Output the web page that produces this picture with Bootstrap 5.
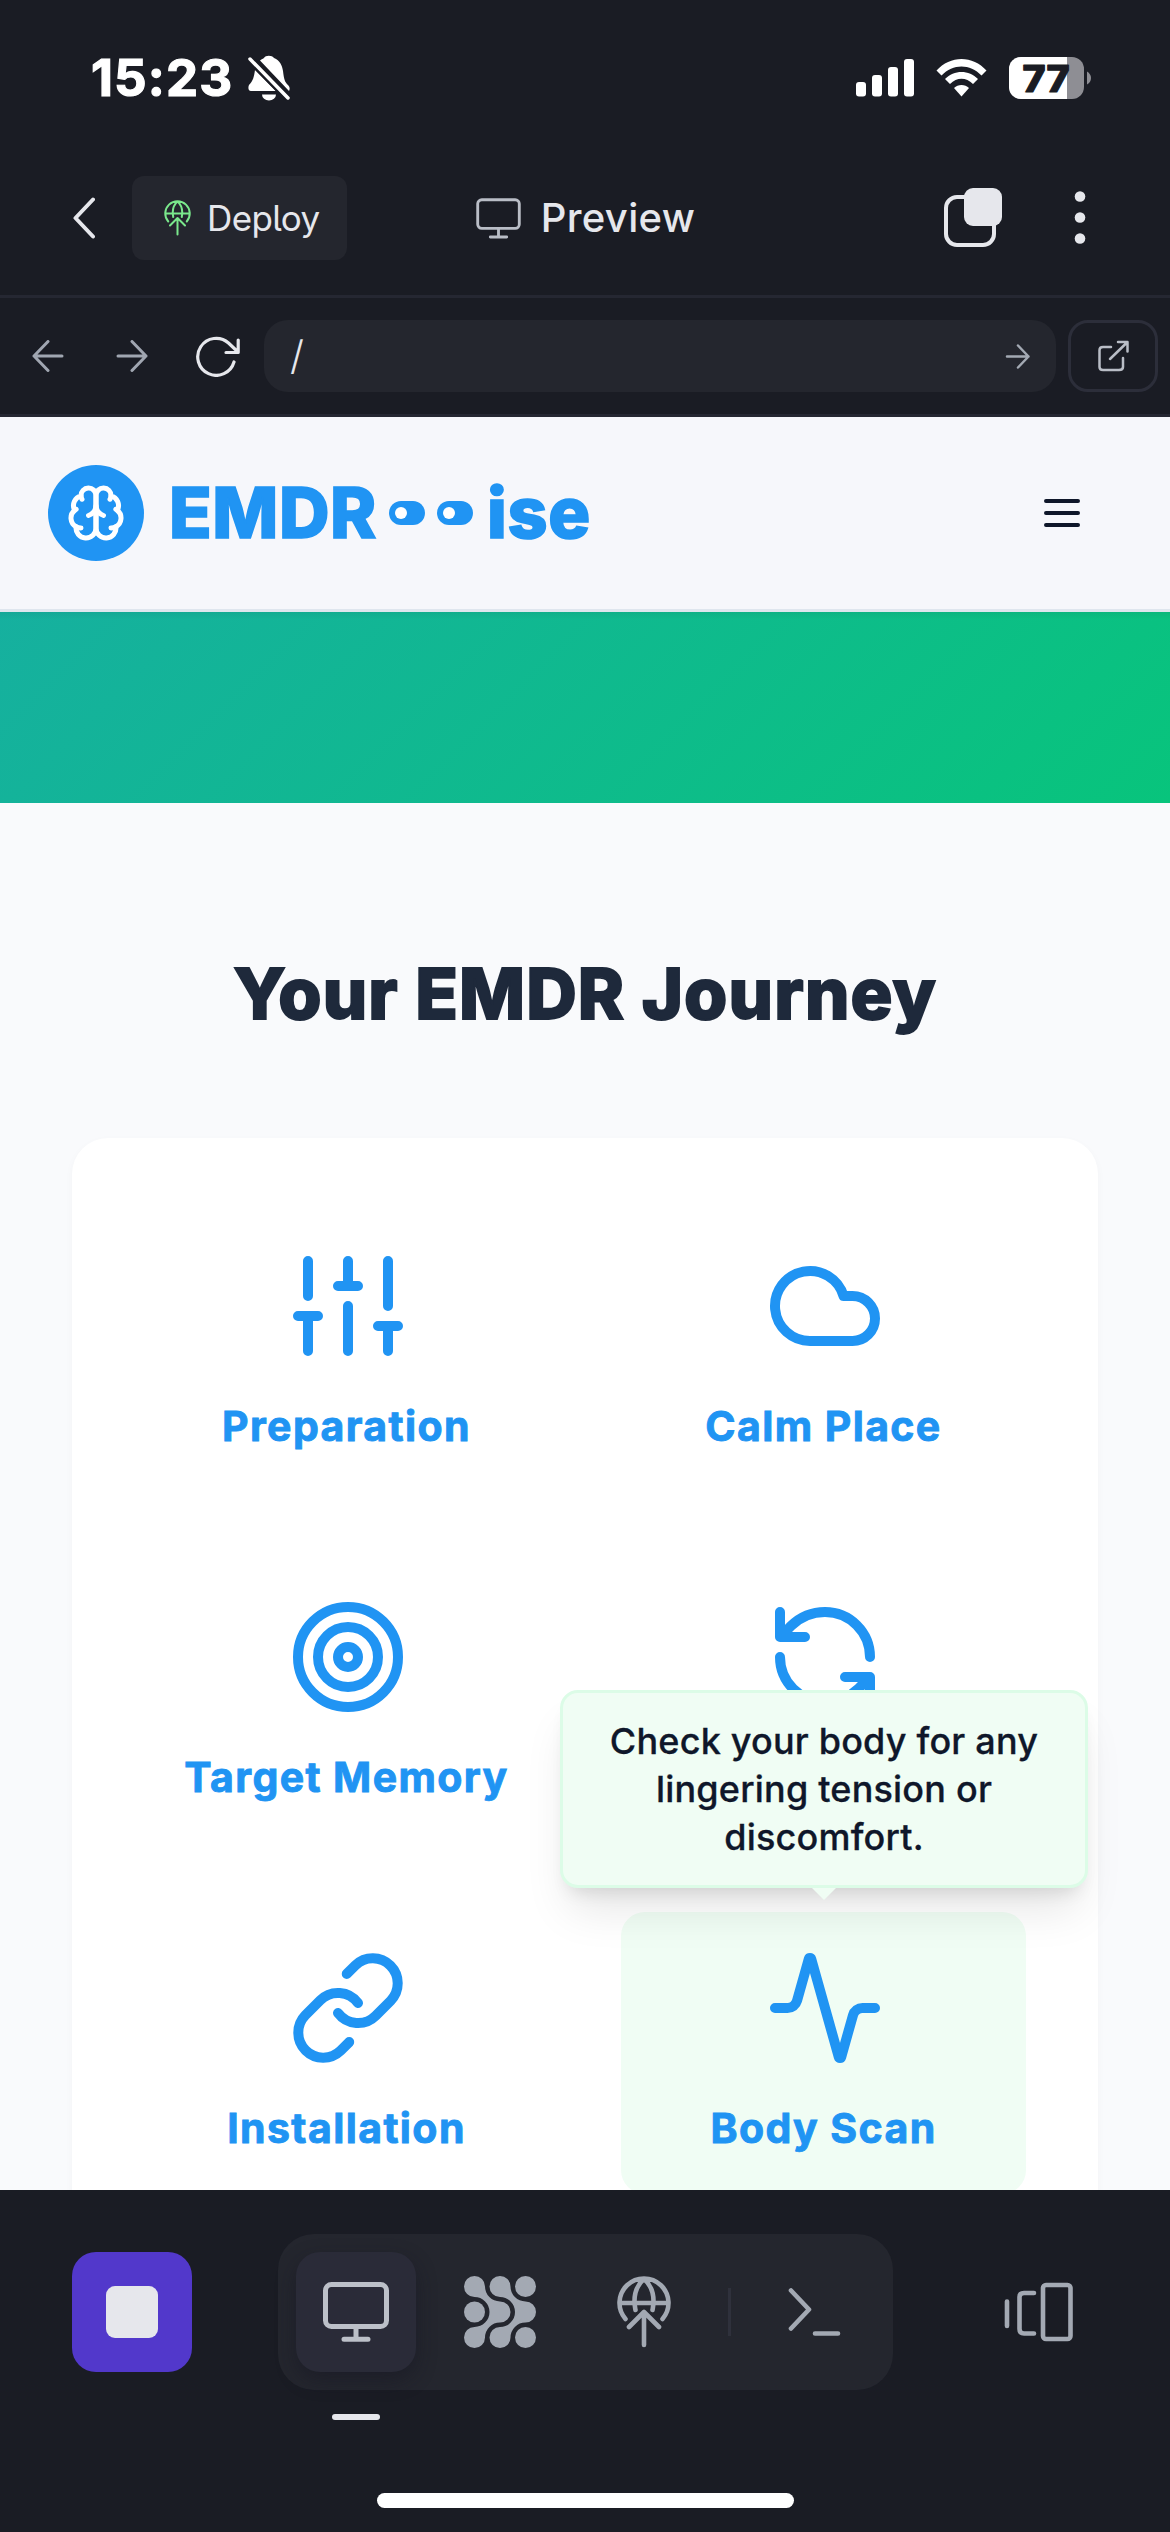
<!DOCTYPE html>
<html lang="en">
<head>
<meta charset="utf-8">
<title>EMDRwise preview</title>
<meta name="viewport" content="width=device-width, initial-scale=1">
<link rel="stylesheet" href="https://cdn.jsdelivr.net/npm/bootstrap@5.3.0/dist/css/bootstrap.min.css">
<style>
:root { --ink:#1a1c24; --panel:#24262e; --line:#252732; --light:#e6e7ec; --mute:#a3a9b3; --blue:#2094f3; }
body { width:1170px; height:2532px; overflow:hidden; background:var(--ink); font-family:Inter,"Liberation Sans",sans-serif; }
svg { display:block; flex:none; fill:none; stroke-linecap:round; stroke-linejoin:round; }
.status { height:141px; padding:15px 78px 0 91px; }
.clock { font-size:51px; font-weight:700; line-height:60px; width:157px; letter-spacing:1.1px; -webkit-text-stroke:1.2px #fff; }
.appbar { height:157px; padding:0 78px 0 73px; border-bottom:3px solid var(--line); color:var(--light); display:grid; grid-template-columns:1fr auto 1fr; align-items:center; }
.deploy { background:var(--panel); border-radius:12px; width:215px; height:84px; margin-left:37px; padding-left:32px; gap:16px; font-size:35px; color:var(--light); }
.deploy span { letter-spacing:-.6px; font-feature-settings:"cv05"; }
.title-grp { gap:20px; padding-left:6px; }
.title-txt { font-size:40px; font-weight:500; letter-spacing:.3px; }
.urlbar { height:119px; padding:0 12px 0 32px; border-bottom:3px solid var(--line); }
.url { height:72px; width:792px; border-radius:24px; background:var(--panel); margin-left:24px; padding:0 26px 0 26px; }
.url span { font-size:40px; font-weight:300; color:var(--light); }
.open-btn { width:90px; height:72px; border:3px solid #2c2e3a; border-radius:20px; margin-left:12px; }
.site { height:1773px; background:#f9fafc; }
.site-head { height:195px; background:#f6f7fb; border-bottom:3px solid #dfe6ee; padding:0 84px 0 48px; }
.logo { width:96px; height:96px; background:var(--blue); border-radius:50%; margin-right:25px; }
.brand { font-size:70px; font-weight:800; color:var(--blue); line-height:1; letter-spacing:.6px; -webkit-text-stroke:1.6px var(--blue); }
.eye { width:36px; height:24px; border-radius:12px; background:var(--blue); padding-left:6px; }
.eye i { width:12px; height:12px; border-radius:50%; background:#fff; }
.hero { height:191px; background:linear-gradient(180deg,rgba(0,0,0,.05),transparent 8px),linear-gradient(135deg,#16b09f 0%,#08c47c 100%); }
.journey { font-size:70px; font-weight:800; color:#1e293b; line-height:84px; margin:149px 0 102px; letter-spacing:1.1px; -webkit-text-stroke:1.8px #1e293b; }
.steps { margin:0 72px; background:#fff; border-radius:36px; padding:72px; display:grid; grid-template-columns:405px 405px; column-gap:72px; row-gap:69px; box-shadow:0 3px 9px rgba(15,23,42,.03); }
.step { height:282px; border-radius:24px; padding-top:36px; position:relative; color:var(--blue); font-size:41px; font-weight:700; }
.step svg { width:120px; height:120px; stroke:var(--blue); stroke-width:2; margin-left:3px; }
.step .name { line-height:60px; margin-top:30px; white-space:nowrap; letter-spacing:1.4px; -webkit-text-stroke:.9px var(--blue); }
.step.on { background:#f0fdf4; }
.tip { position:absolute; left:-61px; bottom:306px; width:528px; height:198px; z-index:2; background:#f0fdf4; border:3px solid #dcfce7; border-radius:18px; box-shadow:0 30px 45px -9px rgba(0,0,0,.1),0 12px 18px -9px rgba(0,0,0,.12); color:#0f172a; font-size:36px; font-weight:500; line-height:48px; letter-spacing:.2px; padding:24px 36px 18px; -webkit-text-stroke:.3px #0f172a; }
.tip::after { content:""; position:absolute; left:249px; top:195px; border:12px solid transparent; border-top-color:#f0fdf4; border-bottom:0; }
.dock { height:342px; padding:44px 96px 0 72px; position:relative; }
.stop { width:120px; height:120px; border-radius:24px; background:#5238cb; margin-top:18px; }
.stop i { width:52px; height:52px; border-radius:9px; background:var(--light); }
.tabs { width:615px; height:156px; border-radius:36px; background:var(--panel); margin-left:86px; padding:18px; }
.tab { width:120px; height:120px; border-radius:24px; position:relative; }
.tab + .tab, .tab + .sep, .sep + .tab { margin-left:24px; }
.tab.on { background:#2a2b38; box-shadow:0 8px 20px rgba(20,20,34,.45); }
.tab.on::after { content:""; position:absolute; left:36px; top:162px; width:48px; height:6px; border-radius:3px; background:var(--light); }
.sep { width:3px; height:48px; background:#2f313c; }
.home { position:absolute; left:377px; top:303px; width:417px; height:15px; border-radius:8px; background:#fff; }
</style>
</head>
<body class="d-flex flex-column">
<svg width="0" height="0" class="position-absolute">
  <symbol id="globe" viewBox="0 0 54 72"><path d="M8.500 43A24.500 24.500 0 1 1 45.500 43M2.500 27H51.500M27 3C20 9 17.500 18 17.500 25C17.500 29 18 31 18.500 34M27 3C34 9 36.500 18 36.500 25C36.500 29 36 31 35.500 34M27 37V69M12 51L27 36L42 51"/></symbol>
  <symbol id="screen" viewBox="0 0 66 60"><rect x="2.500" y="2.500" width="61" height="42" rx="6"/><path d="M33 45V57M21 57.200H45"/></symbol>
</svg>

<header class="status d-flex align-items-center text-white">
  <div class="clock">15:23</div>
  <svg width="42" height="46" viewBox="0 0 42 46"><path fill="#fff" d="M12 5.500C14 4 15 3.500 16 3C17.500 0 24 0 26 3C32 5.500 34 10 35 16C36 25 37 27 40 30C42 32 42 34 41 36ZM7 15L28 36H3C0 36 0 32 1 30C5 26 6 22 7 15ZM14 39.500H28A7 6 0 0 1 14 39.500Z"/><path d="M2 4L40 43" stroke="#1a1c24" stroke-width="8"/><path d="M2 4L40 43" stroke="#fff" stroke-width="3.500"/></svg>
  <svg class="ms-auto" width="58" height="40" viewBox="0 0 58 40"><g fill="#fff"><rect y="24" width="10" height="14.500" rx="3"/><rect x="16" y="17" width="10" height="21.500" rx="3"/><rect x="32" y="9" width="10" height="29.500" rx="3"/><rect x="48" y="1" width="10" height="37.500" rx="3"/></g></svg>
  <svg style="margin-left:22px" width="51" height="40" viewBox="0 0 51 40"><g fill="#fff"><path d="M0.500 12.500C14-3 37-3 50.500 12.500L45.500 17.500C34 5.500 17 5.500 5.500 17.500Z"/><path d="M9 21C18 11.500 33 11.500 42 21L37 26C30 19 21 19 14 26Z"/><path d="M18 30C22 26 29 26 33 30L25.500 38.500Z"/></g></svg>
  <svg style="margin-left:22px" width="83" height="42" viewBox="0 0 83 42"><defs><clipPath id="bat"><rect width="75" height="42" rx="12"/></clipPath></defs><g clip-path="url(#bat)"><rect width="75" height="42" fill="#8e8e94"/><rect width="58" height="42" fill="#fff"/></g><path d="M78 14.500Q82 17 82 21T78 27.500Z" fill="#8e8e94"/><text x="13.500" y="34.500" fill="#1a1c24" stroke="#1a1c24" stroke-width="1.200" font-family="Inter" font-weight="800" font-size="37" textLength="47" lengthAdjust="spacingAndGlyphs">77</text></svg>
</header>

<nav class="appbar">
  <div class="d-flex align-items-center">
    <svg width="22" height="42" viewBox="0 0 22 42" stroke="#e6e7ec" stroke-width="4"><path d="M20 2.500L2.500 21L20 39.500"/></svg>
    <div class="deploy d-flex align-items-center"><svg width="27" height="36" stroke="#7ae88c" stroke-width="4"><use href="#globe"/></svg><span>Deploy</span></div>
  </div>
  <div class="title-grp d-flex align-items-center"><svg width="45" height="41" stroke="#b9bdc6" stroke-width="4.200"><use href="#screen"/></svg><span class="title-txt">Preview</span></div>
  <div class="d-flex align-items-center justify-content-end">
    <svg width="60" height="60" viewBox="0 0 60 60"><rect x="3" y="9" width="48" height="48" rx="11" stroke="#e6e7ec" stroke-width="4"/><rect x="21" y="0" width="38" height="38" rx="9" fill="#e6e7ec"/></svg>
    <svg style="margin-left:69px" width="20" height="56" viewBox="0 0 20 56"><g fill="#e6e7ec"><circle cx="8" cy="6.500" r="5.300"/><circle cx="8" cy="27.500" r="5.300"/><circle cx="8" cy="48.500" r="5.300"/></g></svg>
  </div>
</nav>

<div class="urlbar d-flex align-items-center">
  <svg width="32" height="32" viewBox="0 0 32 32" stroke="#a0a6b1" stroke-width="3"><path d="M30 16H2M16 1.500L2 16L16 30.500"/></svg>
  <svg style="margin-left:52px" width="32" height="32" viewBox="0 0 32 32" stroke="#a0a6b1" stroke-width="3"><path d="M2 16H30M16 1.500L30 16L16 30.500"/></svg>
  <svg style="margin-left:48px" width="44" height="42" viewBox="0 0 44 42" stroke="#e6e7ec" stroke-width="3.200"><path d="M38 27A18.500 18.500 0 1 1 32.500 8L42 17M42.200 5V17.500H30"/></svg>
  <div class="url d-flex align-items-center justify-content-between">
    <span>/</span>
    <svg width="25" height="25" viewBox="0 0 25 25" stroke="#a3a9b3" stroke-width="2.500"><path d="M2 12.500H23.500M13 1.500L23.500 12.500L13 23.500"/></svg>
  </div>
  <div class="open-btn d-flex align-items-center justify-content-center"><svg width="32" height="32" viewBox="0 0 32 32" stroke="#b9bdc6" stroke-width="2.500"><path d="M14 7H6Q2.500 7 2.500 10V27Q2.500 30 6 30H22Q26 30 26 27V18M21 2H30.500V11.500M30 2.500L13 19"/></svg></div>
</div>

<main class="site overflow-hidden">
  <div class="site-head d-flex align-items-center">
    <div class="logo d-flex align-items-center justify-content-center"><svg width="60" height="60" viewBox="0 0 24 24" stroke="#fff" stroke-width="2"><path d="M12 5a3 3 0 1 0-5.997.125 4 4 0 0 0-2.526 5.770 4 4 0 0 0 .556 6.588A4 4 0 1 0 12 18Z"/><path d="M12 5a3 3 0 1 1 5.997.125 4 4 0 0 1 2.526 5.770 4 4 0 0 1-.556 6.588A4 4 0 1 1 12 18Z"/><path d="M15 13a4.500 4.500 0 0 1-3-4 4.500 4.500 0 0 1-3 4M17.599 6.500a3 3 0 0 0 .399-1.375M6.003 5.125A3 3 0 0 0 6.401 6.500M3.477 10.896a4 4 0 0 1 .585-.396M19.938 10.500a4 4 0 0 1 .585.396M6 18a4 4 0 0 1-1.967-.516M19.967 17.484A4 4 0 0 1 18 18"/></svg></div>
    <div class="brand d-flex align-items-center"><span>EMDR</span><span class="eye d-flex align-items-center" style="margin:0 12px 0 12px"><i></i></span><span class="eye d-flex align-items-center" style="margin-right:14px"><i></i></span><span>ise</span></div>
    <svg class="ms-auto" width="48" height="36" viewBox="0 0 48 36" stroke="#0f172a" stroke-width="4"><path d="M8 6H40M8 18H40M8 30H40"/></svg>
  </div>
  <section class="hero"></section>
  <h1 class="journey text-center">Your EMDR Journey</h1>
  <section class="steps">
    <div class="step d-flex flex-column align-items-center"><svg viewBox="0 0 24 24"><path d="M4 21v-7M4 10V3M12 21v-9M12 8V3M20 21v-5M20 12V3M2 14h4M10 8h4M18 16h4"/></svg><div class="name">Preparation</div></div>
    <div class="step d-flex flex-column align-items-center"><svg viewBox="0 0 24 24"><path d="M17.500 19H9a7 7 0 1 1 6.710-9h1.790a4.500 4.500 0 1 1 0 9Z"/></svg><div class="name">Calm Place</div></div>
    <div class="step d-flex flex-column align-items-center"><svg viewBox="0 0 24 24"><circle cx="12" cy="12" r="10"/><circle cx="12" cy="12" r="6"/><circle cx="12" cy="12" r="2"/></svg><div class="name">Target Memory</div></div>
    <div class="step d-flex flex-column align-items-center"><svg viewBox="0 0 24 24"><path d="M21 12a9 9 0 0 0-9-9 9.750 9.750 0 0 0-6.740 2.740L3 8M3 3v5h5M3 12a9 9 0 0 0 9 9 9.750 9.750 0 0 0 6.740-2.740L21 16M16 16h5v5"/></svg></div>
    <div class="step d-flex flex-column align-items-center"><svg viewBox="0 0 24 24"><path d="M10 13a5 5 0 0 0 7.540.54l3-3a5 5 0 0 0-7.070-7.070l-1.720 1.710M14 11a5 5 0 0 0-7.540-.54l-3 3a5 5 0 0 0 7.070 7.070l1.710-1.710"/></svg><div class="name">Installation</div></div>
    <div class="step on d-flex flex-column align-items-center"><svg viewBox="0 0 24 24"><path d="M22 12h-2.480a2 2 0 0 0-1.930 1.460l-2.350 8.360a.25.25 0 0 1-.48 0L9.240 2.180a.25.25 0 0 0-.48 0l-2.350 8.360A2 2 0 0 1 4.490 12H2"/></svg><div class="name">Body Scan</div>
      <div class="tip text-center">Check your body for any lingering tension or discomfort.</div>
    </div>
  </section>
</main>

<footer class="dock d-flex align-items-start">
  <div class="stop d-flex align-items-center justify-content-center"><i></i></div>
  <div class="tabs d-flex align-items-center">
    <div class="tab on d-flex align-items-center justify-content-center"><svg width="66" height="60" stroke="#bcc0c8" stroke-width="5"><use href="#screen"/></svg></div>
    <div class="tab d-flex align-items-center justify-content-center"><svg width="72" height="72" viewBox="0 0 72 72"><g fill="#a3a9b3"><path d="M10.500 0A10.500 10.500 0 0 1 21 10.500A15 15 0 0 0 36 25.500A10.500 10.500 0 0 1 36 46.500A15 15 0 0 0 21 61.500A10.500 10.500 0 1 1 10.500 51A15 15 0 0 0 10.500 21A10.500 10.500 0 0 1 10.500 0Z"/><path d="M36 0A10.500 10.500 0 0 1 46.500 10.500A15 15 0 0 0 61.500 25.500A10.500 10.500 0 0 1 61.500 46.500A15 15 0 0 0 46.500 61.500A10.500 10.500 0 1 1 36 51A15 15 0 0 0 36 21A10.500 10.500 0 0 1 36 0Z"/><circle cx="61.500" cy="10.500" r="10.500"/><circle cx="10.500" cy="36" r="10.500"/><circle cx="61.500" cy="61.500" r="10.500"/></g></svg></div>
    <div class="tab d-flex align-items-center justify-content-center"><svg width="54" height="72" stroke="#a3a9b3" stroke-width="4.600"><use href="#globe"/></svg></div>
    <div class="sep"></div>
    <div class="tab d-flex align-items-center justify-content-center"><svg width="54" height="50" viewBox="0 0 54 50" stroke="#a3a9b3" stroke-width="4.600"><path d="M3 3.500L21 22.500L3 41.500M27 46.500H50"/></svg></div>
  </div>
  <svg class="ms-auto" style="margin-top:48px" width="70" height="60" viewBox="0 0 70 60" stroke="#a3a9b3" stroke-width="4.600"><path d="M3 19.500V44M30 11H20Q15.500 11 15.500 15V47Q15.500 51.500 20 51.500H30"/><rect x="39" y="3" width="27.500" height="54" rx="3"/></svg>
  <div class="home"></div>
</footer>
<script src="https://cdn.jsdelivr.net/npm/bootstrap@5.3.0/dist/js/bootstrap.bundle.min.js"></script>
</body>
</html>
